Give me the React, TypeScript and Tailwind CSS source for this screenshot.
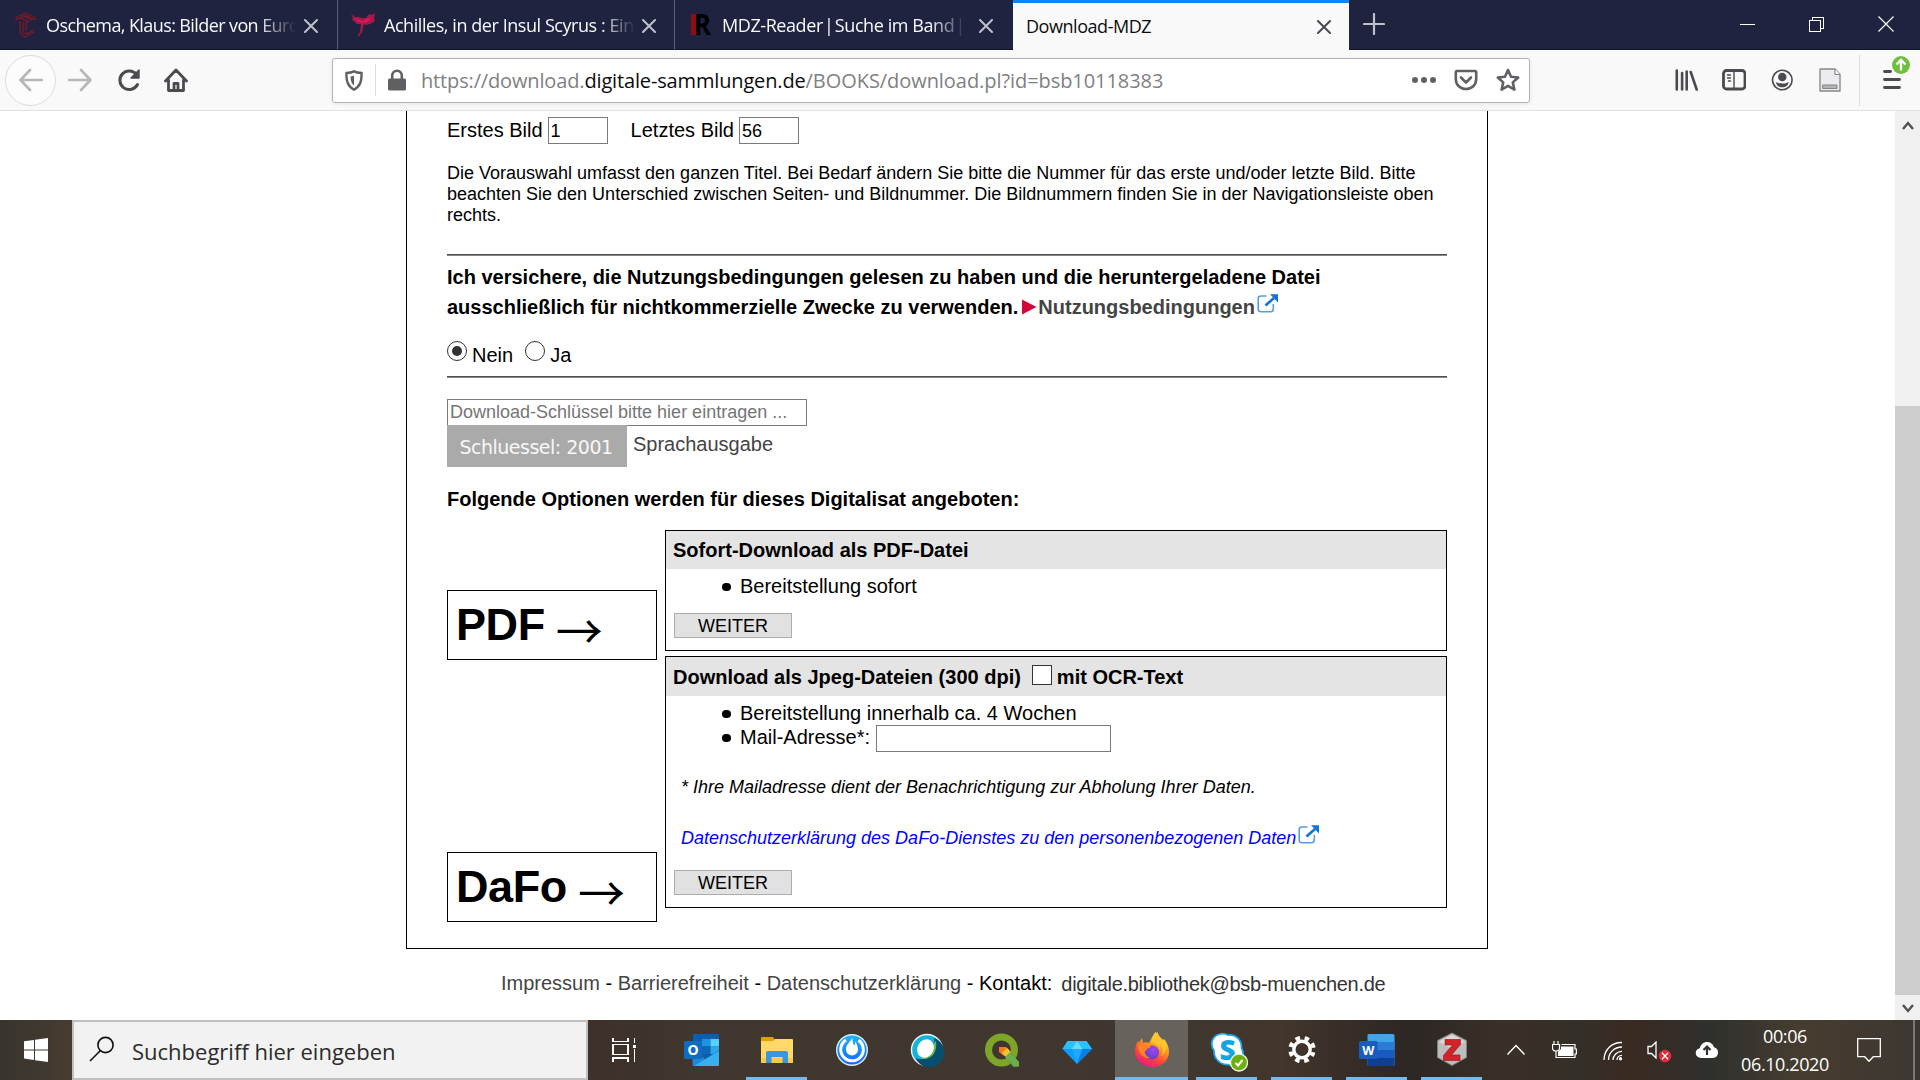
import React from "react";

type Kids = { children?: React.ReactNode };

const ui = "font-['Open_Sans',sans-serif]";

/* ---------- browser chrome ---------- */

function Cross({ className }: { className: string }) {
  return (
    <svg viewBox="0 0 14 14" className={`h-3.5 w-3.5 shrink-0 ${className}`}>
      <path d="M1 1l12 12M13 1L1 13" stroke="currentColor" strokeWidth="2" strokeLinecap="round" />
    </svg>
  );
}

function Tab({ icon, children, className, textClass }: Kids & { icon: React.ReactNode; className: string; textClass: string }) {
  return (
    <div className={`flex h-[50px] items-center overflow-hidden pt-px ${className}`}>
      {icon}
      <div
        className={`shrink-0 overflow-hidden whitespace-nowrap text-[18px] leading-6 text-[#f9f9fa] ${textClass}`}
      >
        {children}
      </div>
      <Cross className="mt-px text-[#bfc0ca]" />
    </div>
  );
}

function FavC() {
  return (
    <svg viewBox="0 0 22 26" className="mr-[9px] h-[26px] w-[22px] shrink-0" fill="none" stroke="#7d1a26" strokeWidth="1.300">
      <path d="M1 5.500L10.500 1 20 5.500M1 8l9.500-4.500L20 8M4.500 5.500l10 4.500M8 3.500l9 4.500M5 9v12l5 4 9-5M8 9.500v10.500l3 2 8-4M11 9.500v9M14 9.500L11 11M1 5.500V8M20 5.500V8" />
    </svg>
  );
}

function FavEagle() {
  return (
    <svg viewBox="0 0 24 26" className="mr-[9px] h-[26px] w-6 shrink-0">
      <path
        d="M0 2l4 3 4 0 3 1 4 0 3-4 2 1 4-2-1 5 1 3-3 2-2 1-4 1-2-1-1 4-1 4-2 3-2 2 0-2 2-3 1-8-4 0-3-3-2-1 1-2z"
        fill="#a8174a"
      />
      <path d="M3 5l5 3 4 1 5-3 3 1-4 3-6 1-4-2z" fill="#d9185a" />
    </svg>
  );
}

function FavR() {
  return (
    <svg viewBox="0 0 20 24" className="mr-[11px] h-6 w-5 shrink-0">
      <rect x="0" y="1" width="5" height="21" fill="#8c0d12" />
      <text x="3" y="22" fontFamily="Open Sans" fontWeight="700" fontSize="28" fill="#000" textLength="17" lengthAdjust="spacingAndGlyphs">
        R
      </text>
    </svg>
  );
}

function TabStrip() {
  return (
    <div className={`flex h-[50px] bg-[#202340] ${ui}`}>
      <Tab
        icon={<FavC />}
        className="w-[338px] border-r border-b border-r-[#5d5f75] border-b-[#14162e] pl-[15px]"
        textClass="mr-[8px] w-[250px] tracking-[-0.6px] [mask-image:linear-gradient(to_left,transparent,black_38px)]"
      >
        Oschema, Klaus: Bilder von Europa
      </Tab>
      <Tab
        icon={<FavEagle />}
        className="w-[337px] border-r border-b border-r-[#5d5f75] border-b-[#14162e] pl-[13px]"
        textClass="mr-[7px] w-[251px] tracking-[-0.44px] [mask-image:linear-gradient(to_left,transparent,black_34px)]"
      >
        Achilles, in der Insul Scyrus : Ein
      </Tab>
      <Tab
        icon={<FavR />}
        className="w-[338px] border-b border-b-[#14162e] pl-[16px]"
        textClass="mr-[7px] w-[250px] tracking-[-0.42px] [mask-image:linear-gradient(to_left,transparent_6px,black_42px)]"
      >
        MDZ-Reader <span className="-mx-[3px]">|</span> Suche im Band <span className="-mx-[3px]">|</span> A
      </Tab>
      <div className="flex w-[336px] items-center justify-between border-t-[3px] border-[#0a84ff] bg-[#f9f9fa] pr-[18px] pb-[2px] pl-[13px] text-[18px] leading-6 tracking-[-0.45px] text-[#0c0c0d]">
        Download-MDZ
        <Cross className="mt-[2px] text-[#4a4a4f]" />
      </div>
      <div className="flex flex-1 items-center justify-between border-b border-[#14162e] pr-[26px] pb-px pl-[14px]">
        <svg viewBox="0 0 22 22" className="h-[22px] w-[22px]">
          <path d="M11 1v20M1 11h20" stroke="#bfc0ca" strokeWidth="2.200" strokeLinecap="round" />
        </svg>
        <div className="flex items-center gap-[54px] text-white">
          <svg viewBox="0 0 15 15" className="h-[15px] w-[15px]" shapeRendering="crispEdges">
            <path d="M0 7.500h15" stroke="currentColor" />
          </svg>
          <svg viewBox="0 0 15 15" className="h-[15px] w-[15px]" fill="none" stroke="currentColor" shapeRendering="crispEdges">
            <path d="M.5 3.500h11v11h-11zM3.500 3.500v-3h11v11h-3" />
          </svg>
          <svg viewBox="0 0 16 16" className="h-4 w-4" stroke="currentColor" strokeWidth="1.200">
            <path d="M.5.500l15 15M15.500.500l-15 15" />
          </svg>
        </div>
      </div>
    </div>
  );
}

function NavIcon({ children, className = "text-[#4a4a4f]" }: Kids & { className?: string }) {
  return (
    <svg viewBox="0 0 24 24" className={`h-6 w-6 shrink-0 ${className}`} fill="none" stroke="currentColor" strokeWidth="2.600" strokeLinecap="round" strokeLinejoin="round">
      {children}
    </svg>
  );
}

function Toolbar() {
  return (
    <div className={`flex h-[61px] items-center border-b border-[#e1e1e2] bg-[#f9f9fa] ${ui}`}>
      <div className="ml-[5px] flex h-[51px] w-[51px] items-center justify-center rounded-full border border-[#dcdcdd] bg-[#fcfcfc]">
        <NavIcon className="text-[#b7b7ba]">
          <path d="M23 12H2M11 2L1.500 12l9.500 10" />
        </NavIcon>
      </div>
      <div className="ml-[12px] flex gap-6">
        <NavIcon className="text-[#b7b7ba]">
          <path d="M1 12h21M13 2l9.500 10L13 22" />
        </NavIcon>
        <NavIcon>
          <path d="M21.500 16.500A9.300 9.300 0 1 1 20.500 6.500" strokeWidth="3" />
          <path d="M23 2v8h-8z" fill="currentColor" strokeWidth="1.400" />
        </NavIcon>
        <NavIcon>
          <path d="M1.500 13L12 2l10.500 11M4.500 12v10.500h15V12M10 22v-6.500h4V22" strokeWidth="2.800" />
        </NavIcon>
      </div>
      <div className="ml-[144px] flex h-[45px] w-[1198px] items-center rounded-[3px] border border-[#b4b4b6] bg-white text-[20px] leading-[26px] text-[#808083] shadow-[0_1px_4px_rgba(0,0,0,0.08)]">
        <svg viewBox="0 0 18 21" className="ml-3 h-[21px] w-[18px] shrink-0" fill="none" stroke="#606064" strokeWidth="2.400" strokeLinejoin="round">
          <path d="M9 1.300c2.500 1.200 5 1.500 7.600 1.700 0 8-1 13-7.600 16.700C2.400 16 1.400 11 1.400 3 4 2.800 6.500 2.500 9 1.300z" />
          <path d="M9 5.500c-1.300.6-2.200.8-3.500 1 .2 4.300.8 7 3.500 9z" fill="#606064" stroke="none" />
        </svg>
        <div className="ml-3 h-8 w-px bg-[#dededf]" />
        <svg viewBox="0 0 18 22" className="ml-3 h-[22px] w-[18px] shrink-0">
          <path d="M4.200 11V6.500a4.800 4.800 0 0 1 9.600 0V11" fill="none" stroke="#606064" strokeWidth="2.600" />
          <rect x="0" y="9.500" width="18" height="12" rx="1.500" fill="#606064" />
        </svg>
        <div className="ml-[15px] flex-1 whitespace-nowrap pt-px tracking-[-0.06px]">
          <span className="tracking-[-0.15px]">https://download.</span>
          <span className="tracking-[-0.15px] text-[#0c0c0d]">digitale-sammlungen.de</span>/BOOKS/download.pl?id=bsb10118383
        </div>
        <svg viewBox="0 0 24 6" className="h-1.5 w-6" fill="#606064">
          <circle cx="3" cy="3" r="3" />
          <circle cx="12" cy="3" r="3" />
          <circle cx="21" cy="3" r="3" />
        </svg>
        <NavIcon className="ml-[18px] text-[#606064]">
          <path d="M3 3h18c.8 0 1.200.5 1.200 1.200V11c0 6-4.500 10-10.200 10S1.800 17 1.800 11V4.200C1.800 3.500 2.200 3 3 3zM7 9.500l5 5 5-5" strokeWidth="2.600" />
        </NavIcon>
        <NavIcon className="mr-[9px] ml-[18px] text-[#606064]">
          <path d="M12 2l3 6.700 7.200.8-5.400 4.900 1.600 7.200L12 17.900l-6.400 3.700 1.600-7.200L1.800 9.500 9 8.700z" strokeWidth="2.600" />
        </NavIcon>
      </div>
      <div className="ml-[144px] flex items-center gap-6">
        <NavIcon>
          <path d="M2.800 2.500v19M8.100 5v16.500M12.700 3.500v18M16.700 4l6 17.500" strokeWidth="2.600" />
        </NavIcon>
        <NavIcon>
          <rect x="1.500" y="2.500" width="21.500" height="18.500" rx="3" strokeWidth="2.800" />
          <path d="M12 3v18M5.500 7h3M5.500 10h3M6.500 13h2" strokeWidth="1.400" />
        </NavIcon>
        <NavIcon>
          <circle cx="12.300" cy="12" r="9.800" strokeWidth="1.600" />
          <ellipse cx="12.300" cy="9" rx="4.200" ry="4.300" fill="currentColor" stroke="none" />
          <path d="M5.800 14.200c2 .3 2.500 1.300 6.500 1.300s4.500-1 6.500-1.300C17.800 18 15.300 19.300 12.300 19.300S6.800 18 5.800 14.200z" fill="currentColor" stroke="none" />
        </NavIcon>
        <NavIcon className="text-[#86868a]">
          <path d="M2 1h15l5 5.500V23H2z" fill="#ececee" strokeWidth="1.300" />
          <path d="M17 1v5.500h5" fill="#fff" strokeWidth="1.200" />
          <rect x="5" y="17" width="14" height="3.500" fill="#b3b3b6" strokeWidth="1" />
        </NavIcon>
      </div>
      <div className="ml-[17px] h-[51px] w-px bg-[#dededf]" />
      <svg viewBox="0 0 30 36" className="-mt-[14px] ml-[22px] h-9 w-[30px]">
        <path d="M2.500 16.500h6M2.500 24.500h15M2.500 32.500h15" stroke="#4a4a4f" strokeWidth="2.800" strokeLinecap="round" />
        <circle cx="19" cy="10" r="9" fill="#70bf3f" />
        <path d="M19 15.500V5.500M14.500 9.500L19 5l4.500 4.500" fill="none" stroke="#fff" strokeWidth="2.300" />
      </svg>
    </div>
  );
}

/* ---------- page ---------- */

function ExternalIcon({ className }: { className: string }) {
  return (
    <svg viewBox="0 0 21 19" className={`inline-block h-[19px] w-[21px] ${className}`} fill="none">
      <path d="M9.500 2H4Q1.200 2 1.200 4.500v10.500Q1.200 17.700 4 17.700h9.500q2.800 0 2.800-2.700v-5" stroke="#5a9de0" strokeWidth="1.600" />
      <path d="M8.500 11.500L17 4" stroke="#1273d1" strokeWidth="2.600" />
      <path d="M13 .3h8V8.500z" fill="#1273d1" />
    </svg>
  );
}

function Field({ children, className }: Kids & { className: string }) {
  return <div className={`flex h-[27px] items-center border border-[#7a7a7a] bg-white px-[2px] text-[18px] leading-5 ${className}`}>{children}</div>;
}

function Rule({ className }: { className: string }) {
  return <div className={`h-[2px] border-t border-b border-t-[#4f4f4f] border-b-[#858585] ${className}`} />;
}

function Weiter({ className }: { className: string }) {
  return (
    <div className={`ml-2 flex h-[25px] w-[118px] items-center justify-center border border-[#adadad] bg-[#e1e1e1] text-[18px] leading-5 ${className}`}>
      WEITER
    </div>
  );
}

function Bullet({ children }: Kids) {
  return (
    <li className="flex h-6 items-start whitespace-nowrap">
      <span className="mt-[9px] mr-[9px] h-2 w-[9px] rounded-full bg-black" />
      {children}
    </li>
  );
}

function BigLabel({ children, className }: Kids & { className: string }) {
  return (
    <div className={`flex h-[70px] items-center border border-black pl-2 text-[45px] leading-[50px] font-bold tracking-[-0.4px] ${className}`}>
      {children}
      <span className="ml-[11px] inline-block translate-y-[4px] font-['Noto_Sans_CJK_JP',sans-serif] text-[47px] font-normal">→</span>
    </div>
  );
}

function Page() {
  return (
    <div className="flex h-[909px] bg-white font-['Liberation_Sans',Arial,sans-serif] text-[20px] leading-5 text-black">
      <div className="min-w-0 flex-1 pl-[406px]">
        <div className="w-[1082px] border-x border-b border-black px-10 pt-[6px] pb-[26px]">
          <div className="flex h-[27px] items-center whitespace-nowrap">
            <span className="mb-[2px]">Erstes Bild</span>
            <Field className="ml-[5px] w-[60px]">1</Field>
            <span className="mb-[2px] ml-[23px]">Letztes Bild</span>
            <Field className="ml-[5px] w-[60px]">56</Field>
          </div>
          <p className="mt-[19px] text-[18px] leading-[21px]">
            Die Vorauswahl umfasst den ganzen Titel. Bei Bedarf ändern Sie bitte die Nummer für das erste und/oder letzte Bild. Bitte
            <br />
            beachten Sie den Unterschied zwischen Seiten- und Bildnummer. Die Bildnummern finden Sie in der Navigationsleiste oben
            <br />
            rechts.
          </p>
          <Rule className="mt-[28px]" />
          <p className="mt-[6px] h-[60px] leading-[30px] font-bold whitespace-nowrap">
            Ich versichere, die Nutzungsbedingungen gelesen zu haben und die heruntergeladene Datei
            <br />
            ausschließlich für nichtkommerzielle Zwecke zu verwenden.
            <svg viewBox="0 0 15 16" className="mr-px ml-[4px] inline-block h-4 w-[15px] align-[-1px]">
              <path d="M0 .5L14.500 8 0 15.500z" fill="#d3053b" />
            </svg>
            <span className="text-[#444]">Nutzungsbedingungen</span>
            <ExternalIcon className="ml-[2px] align-[1px]" />
          </p>
          <div className="mt-[19px] flex h-5 items-start">
            <span className="flex h-5 w-5 items-center justify-center rounded-full border border-[#333]">
              <span className="h-2.5 w-2.5 rounded-full bg-[#333]" />
            </span>
            <span className="mt-1 ml-[5px]">Nein</span>
            <span className="ml-[12px] h-5 w-5 rounded-full border border-[#333]" />
            <span className="mt-1 ml-[5px]">Ja</span>
          </div>
          <Rule className="mt-[15px]" />
          <Field className="mt-[21px] w-[360px] pb-[2px] text-[#757575]">Download-Schlüssel bitte hier eintragen ...</Field>
          <div className="-mt-px flex h-[42px]">
            <div className="flex w-[180px] items-center justify-center bg-[#aaa] pt-px pr-[2px] font-['DejaVu_Sans',sans-serif] text-[19px] tracking-[-0.5px] whitespace-nowrap text-[#f7f7f7]">
              Schluessel: 2001
            </div>
            <span className="mt-[9px] ml-[6px] text-[#444]">Sprachausgabe</span>
          </div>
          <p className="mt-[22px] font-bold">Folgende Optionen werden für dieses Digitalisat angeboten:</p>
          <div className="mt-[21px] flex gap-2">
            <div className="w-[210px] pt-[60px]">
              <BigLabel className="">PDF</BigLabel>
              <BigLabel className="mt-[192px]">DaFo</BigLabel>
            </div>
            <div className="flex-1">
              <section className="h-[121px] border border-black">
                <h2 className="flex h-[38px] items-center bg-[#e4e4e4] pl-[7px] font-bold">Sofort-Download als PDF-Datei</h2>
                <ul className="mt-[5px] pl-[56px] leading-6">
                  <Bullet>Bereitstellung sofort</Bullet>
                </ul>
                <Weiter className="mt-[15px]" />
              </section>
              <section className="mt-[5px] h-[252px] border border-black">
                <h2 className="flex h-[39px] items-center bg-[#e4e4e4] pl-[7px] font-bold">
                  Download als Jpeg-Dateien (300 dpi)
                  <span className="mr-[5px] mb-[3px] ml-[11px] h-5 w-5 border border-[#333] bg-white" />
                  mit OCR-Text
                </h2>
                <ul className="mt-[5px] pl-[56px] leading-6">
                  <Bullet>Bereitstellung innerhalb ca. 4 Wochen</Bullet>
                  <Bullet>
                    Mail-Adresse*:
                    <Field className="ml-[6px] w-[235px]" />
                  </Bullet>
                </ul>
                <p className="mt-[28px] pl-[15px] text-[18px] leading-[21px] italic">* Ihre Mailadresse dient der Benachrichtigung zur Abholung Ihrer Daten.</p>
                <p className="mt-[30px] flex h-[21px] pl-[15px] text-[18px] leading-[21px] text-[#0000ff] italic">
                  Datenschutzerklärung des DaFo-Dienstes zu den personenbezogenen Daten
                  <ExternalIcon className="-mt-[3px] ml-[2px]" />
                </p>
                <Weiter className="mt-[21px]" />
              </section>
            </div>
          </div>
        </div>
        <footer className="mt-6 flex pl-[95px] whitespace-pre text-[#444]">
          Impressum<span className="text-black"> - </span>Barrierefreiheit<span className="text-black"> - </span>Datenschutzerklärung
          <span className="text-black"> - Kontakt:</span>
          <span className="ml-[9px] pt-px tracking-[-0.28px] text-[#333]">digitale.bibliothek@bsb-muenchen.de</span>
        </footer>
      </div>
      <div className="flex w-[25px] flex-col items-center bg-[#f0f0f0]">
        <svg viewBox="0 0 12 9" className="mt-[10px] h-[9px] w-3 shrink-0">
          <path d="M1 8l5-6 5 6" fill="none" stroke="#505050" strokeWidth="2.400" />
        </svg>
        <div className="mt-[276px] h-[589px] w-full bg-[#cdcdcd]" />
        <svg viewBox="0 0 12 9" className="mt-[9px] h-[9px] w-3 shrink-0">
          <path d="M1 1l5 6 5-6" fill="none" stroke="#505050" strokeWidth="2.400" />
        </svg>
      </div>
    </div>
  );
}

/* ---------- taskbar ---------- */

function App36({ children }: Kids) {
  return (
    <svg viewBox="0 0 36 36" className="h-9 w-9">
      {children}
    </svg>
  );
}

function Slot({ children, running, active }: Kids & { running?: boolean; active?: boolean }) {
  return (
    <div className="flex h-full w-[75px] justify-center">
      <div className={`flex h-full flex-col items-center pt-3 ${active ? "w-[73px] bg-[#68625d]" : "w-[61px]"}`}>
        {children}
        {(running || active) && <div className="mt-auto h-[3px] w-full bg-[#76b9ed]" />}
      </div>
    </div>
  );
}

function Outlook() {
  return (
    <App36>
      <rect x="9" y="2" width="26" height="24" rx="1.500" fill="#0a5fb4" />
      <rect x="18" y="7" width="8.500" height="7.500" fill="#1e94de" />
      <rect x="26.500" y="7" width="8.500" height="7.500" fill="#52d4fb" />
      <rect x="18" y="14.500" width="8.500" height="7.500" fill="#0f66b9" />
      <rect x="26.500" y="14.500" width="8.500" height="7.500" fill="#2aa6ea" />
      <path d="M8.500 19l13 8 13.500-9v14.500q0 1.500-1.500 1.500H10q-1.500 0-1.500-1.500z" fill="#1c8ad8" />
      <path d="M10 34l25-15v13.500q0 1.500-1.500 1.500z" fill="#38b0ee" />
      <rect x="0" y="9" width="18" height="18" rx="1.500" fill="#0f6cbf" />
      <text x="9" y="23" textAnchor="middle" fontFamily="Open Sans" fontWeight="700" fontSize="14" fill="#fff">O</text>
    </App36>
  );
}

function Explorer() {
  return (
    <App36>
      <path d="M2 6q0-1 1-1h11l2 3v4H2z" fill="#e0a000" />
      <path d="M2 9h12l2-2h17q1 0 1 1v22q0 1-1 1H3q-1 0-1-1z" fill="#ffd868" />
      <path d="M2 26h32v4q0 1-1 1H3q-1 0-1-1z" fill="#f7c94d" />
      <path d="M7 31V21q0-2 2-2h18q2 0 2 2v10h-5.500v-6h-11v6z" fill="#3a96dd" />
    </App36>
  );
}

function Mattermost() {
  return (
    <App36>
      <defs>
        <linearGradient id="mm" x1="0" y1="0" x2="0" y2="1">
          <stop offset="0" stopColor="#23b4f7" />
          <stop offset="1" stopColor="#0a68ff" />
        </linearGradient>
      </defs>
      <circle cx="18" cy="18" r="15.300" fill="url(#mm)" stroke="#dfe9f2" strokeWidth="1.400" />
      <path d="M12 8A11.300 11.300 0 1 0 24.500 8.300" fill="none" stroke="#fff" strokeWidth="3" />
      <path d="M18.500 6c-2.500 3.500-6.500 7-6.500 11.500a6 6 0 0 0 12 0c0-3-1.500-5-2.200-8-.8 1-1 3-1.300 4.500C19 12 18.500 9 18.500 6z" fill="#fff" />
    </App36>
  );
}

function Webex() {
  return (
    <App36>
      <circle cx="18" cy="18" r="15.500" fill="#14b4d8" stroke="#eef4f5" strokeWidth="1.400" />
      <path d="M25 6a15 15 0 1 1-18.500 20c7 3 14 0 16.500-5 2.500-5 3-10 2-15z" fill="#074f6c" />
      <path d="M27 9c1.500 10-3 18-13 18-4-1 2-4 5-8z" fill="#64bd4d" />
      <ellipse cx="16.500" cy="16.500" rx="8" ry="9.500" transform="rotate(30 16.500 16.500)" fill="#fff" />
    </App36>
  );
}

function Qgis() {
  return (
    <App36>
      <circle cx="17.500" cy="18" r="13" fill="none" stroke="#7ea428" strokeWidth="7" />
      <path d="M18 20l6-3 11 13v5h-6z" fill="#55933a" />
      <path d="M15 15h7l3 3-5 6-5-4z" fill="#ef7b22" />
      <path d="M18 21l5-5 4 4-5 5z" fill="#f8c42d" />
      <path d="M21 25l5-5 9 10v4h-5z" fill="#6cad4c" />
    </App36>
  );
}

function Gem() {
  return (
    <App36>
      <path d="M8.500 9h19l5.500 8-15 15L3.500 17z" fill="#0a9dfb" />
      <path d="M8.500 9h19l5.500 8H3.500z" fill="#2ec0fc" />
      <path d="M13 17l5-8 5.500 8z" fill="#6ed8ff" />
      <path d="M13 17h10.500L18 32z" fill="#1ca9ff" />
      <path d="M23.500 17H33L18 32z" fill="#0a7de8" />
    </App36>
  );
}

function Firefox() {
  return (
    <App36>
      <defs>
        <linearGradient id="fx" x1="0.800" y1="0" x2="0.300" y2="1">
          <stop offset="0" stopColor="#fff04a" />
          <stop offset="0.400" stopColor="#ff9a1f" />
          <stop offset="0.700" stopColor="#ff4538" />
          <stop offset="1" stopColor="#e5178a" />
        </linearGradient>
        <radialGradient id="fxc" cx="0.600" cy="0.300" r="0.800">
          <stop offset="0" stopColor="#a244f0" />
          <stop offset="1" stopColor="#5a3fc0" />
        </radialGradient>
      </defs>
      <path
        d="M21.500 0c4 3 4.500 6 6.500 9l2-2c3 3.500 5 8 5 13 0 8-7 15-16.500 15S1 28.500 1 20c0-5 1.500-8 3-11l1 2 3-5 1 5c2-1 4-1 6 0 2-4 4-8 6.500-11z"
        fill="url(#fx)"
      />
      <circle cx="18" cy="20.500" r="7" fill="url(#fxc)" />
      <path d="M4 14c5-3 8-2 13 0-1 2-3 2-4 3 0 1-1.500 2-2.500 2.500 1 4 3 6 7 6-6 2-13-2-13.500-11.500z" fill="#ff8224" />
      <path d="M17 11c5 0 8 3 9 7 .5-3 0-6-1-8 4 4 5 10 2 15 6-6 7-13 1-18-2-2-4-4-4.500-7-3 3-5 6-6.500 11z" fill="#ffc52e" />
    </App36>
  );
}

function Skype() {
  return (
    <svg viewBox="0 0 38 40" className="ml-1 h-10 w-[38px] shrink-0">
      <path d="M10 2c3-1 6 0 8 1 8-1 14 5 13.500 13 3 5 2 13-3 16-4 2-8 1.500-11 .5C10 33 3.500 26 4 18.500-.5 12 2 4 10 2z" fill="#fff" stroke="#1ba3e4" strokeWidth="1.800" />
      <text x="17.500" y="27.500" textAnchor="middle" fontFamily="Open Sans" fontWeight="800" fontSize="28" fill="#12a5e6">S</text>
      <circle cx="29" cy="30.500" r="8.500" fill="#6bb00c" stroke="#f2f4ee" strokeWidth="1.300" />
      <path d="M25.500 31l2.500 2.500 4.500-5.500" fill="none" stroke="#fff" strokeWidth="2" />
    </svg>
  );
}

function Gear() {
  return (
    <App36>
      <circle cx="18" cy="17.500" r="8.200" fill="none" stroke="#fff" strokeWidth="3.400" />
      <circle cx="18" cy="17.500" r="11.600" fill="none" stroke="#fff" strokeWidth="4.200" strokeDasharray="4.600 4.510" strokeDashoffset="2.300" transform="rotate(22.500 18 17.500)" />
    </App36>
  );
}

function Word() {
  return (
    <App36>
      <rect x="8.500" y="2" width="27" height="32" rx="1.500" fill="#41a5ee" />
      <path d="M8.500 10h27v8h-27z" fill="#2b7cd3" />
      <path d="M8.500 18h27v8h-27z" fill="#185abd" />
      <path d="M8.500 26h27v6.500q0 1.500-1.500 1.500h-24q-1.500 0-1.500-1.500z" fill="#103f91" />
      <rect x="0" y="9" width="18.500" height="18" rx="1.500" fill="#1a5cbe" />
      <text x="9.300" y="22.500" textAnchor="middle" fontFamily="Open Sans" fontWeight="700" fontSize="12.500" fill="#fff">W</text>
    </App36>
  );
}

function Zotero() {
  return (
    <App36>
      <path d="M18 1l14.500 7.500v17L18 33.500 3.500 25.500v-17z" fill="#bdbdbd" stroke="#7e7e7e" />
      <path d="M18 2.500l13 7L18 17 5 9.500z" fill="#d9d9d9" />
      <path d="M11 7.500h15.500v5L17.500 23h8.500v5.500H9.500V23.500L18.500 13H11z" fill="#d2232a" stroke="#8d1216" strokeWidth="0.600" />
    </App36>
  );
}

function Taskbar() {
  return (
    <div className={`flex h-[60px] bg-[linear-gradient(to_right,#38342d_0px,#463c31_72px,#3d3129_600px,#40372f_700px,#3f372f_1180px,#43362c_1280px,#2c2624_1410px,#3a3027_1500px,#342f28_1580px,#3a2a22_1630px,#2f302d_1710px,#463d30_1800px,#3f3831_1900px,#3a3733_1920px)] ${ui}`}>
      <div className="flex w-[72px] items-center justify-center">
        <svg viewBox="0 0 24 24" className="h-6 w-6 fill-white">
          <path d="M0 3.300l10-1.300v9.400H0zM11 1.800L24 0v11.400H11zM0 12.500h10V22L0 20.600zM11 12.500h13V24l-13-1.800z" />
        </svg>
      </div>
      <div className="flex w-[516px] items-center border-2 border-[#c0c0c0] bg-[#f2f2f2] text-[22px] leading-7 text-[#2b2b2b]">
        <svg viewBox="0 0 26 26" className="mb-[2px] ml-[15px] h-[26px] w-[26px]" fill="none" stroke="#111" strokeWidth="1.600">
          <circle cx="16.500" cy="9" r="7.600" />
          <path d="M11.500 14.500L1 25" />
        </svg>
        <span className="mt-[2px] ml-[17px]">Suchbegriff hier eingeben</span>
      </div>
      <div className="flex w-[75px] items-center justify-center pr-[2px]">
        <svg viewBox="0 0 25 24" className="h-6 w-[25px]" fill="none" stroke="#fff" strokeWidth="1.200" shapeRendering="crispEdges">
          <path d="M1 0v3.500h15V0M1 6.500h15v10H1zM1 23.500v-3.500h15v3.500M22.500 0v5M22.500 10.500v13" />
          <path d="M21 7h3v3h-3z" fill="#fff" stroke="none" />
        </svg>
      </div>
      <div className="ml-px flex h-full">
        <Slot><Outlook /></Slot>
        <Slot running><Explorer /></Slot>
        <Slot><Mattermost /></Slot>
        <Slot><Webex /></Slot>
        <Slot><Qgis /></Slot>
        <Slot><Gem /></Slot>
        <Slot active><Firefox /></Slot>
        <Slot running><Skype /></Slot>
        <Slot running><Gear /></Slot>
        <Slot running><Word /></Slot>
        <Slot running><Zotero /></Slot>
      </div>
      <div className="flex flex-1 items-center pl-[18px] text-white">
        <svg viewBox="0 0 18 12" className="h-3 w-[18px]" fill="none" stroke="currentColor" strokeWidth="1.400">
          <path d="M.5 10.500L9 1.500l8.500 9" />
        </svg>
        <svg viewBox="0 0 25 18" className="mb-px ml-[27px] h-[18px] w-[25px]" fill="none" stroke="currentColor" strokeWidth="1.200">
          <path d="M2 0v3.500M6 0v3.500M.5 3.500h7V7q0 3-3.500 3T.5 7zM4 10v6.500h19V13h1.400V8H23V3.500H9.500" />
          <path d="M9 5.500h12.500V15H6V10.500L9 8z" fill="currentColor" stroke="none" />
        </svg>
        <svg viewBox="0 0 20 20" className="mt-[2px] ml-[26px] h-5 w-5" fill="none" stroke="currentColor" strokeWidth="1.300">
          <path d="M1 19C1 9 9 1 19 1.500M5.500 19C5.500 12 11 6 19 6M10 19c0-4.500 4-8.700 9-8.700M14 19c0-2.500 2-4.700 5-4.700" />
          <circle cx="17.500" cy="17.700" r="1.700" fill="currentColor" stroke="none" />
        </svg>
        <svg viewBox="0 0 25 22" className="mt-[3px] ml-[24px] h-[22px] w-[25px]" fill="none" stroke="currentColor" strokeWidth="1.300">
          <path d="M9 1v16l-4.500-4.500H1v-7h3.500z" />
          <circle cx="18" cy="15" r="6.300" fill="#dd2c34" stroke="none" />
          <path d="M15 11.800l6 6.400M21 11.800l-6 6.400" stroke="#fff" />
        </svg>
        <svg viewBox="0 0 24 16" className="ml-[23px] h-4 w-6">
          <path d="M6 16a6 5 0 0 1-1.200-9.700C5.500 2.500 8.500 0 12 0s6 2 7 5.300A5.500 5.500 0 0 1 18.500 16z" fill="currentColor" />
          <path d="M12 13V5M8.500 8L12 4.500 15.500 8" fill="none" stroke="#333" strokeWidth="2.200" />
        </svg>
        <div className="ml-[22px] w-[88px] text-center text-[18px] leading-[28px] tracking-[-0.4px]">
          00:06
          <br />
          06.10.2020
        </div>
        <svg viewBox="0 0 24 24" className="ml-[28px] h-6 w-6" fill="none" stroke="currentColor" strokeWidth="1.300">
          <path d="M.7.700h22.600v18h-7L12 23.300l-4.300-4.600h-7z" />
        </svg>
        <div className="mr-[5px] ml-auto h-full w-[2px] bg-[#7c7772]" />
      </div>
    </div>
  );
}

export default function App() {
  return (
    <div className="h-[1080px] w-[1920px] overflow-hidden">
      <TabStrip />
      <Toolbar />
      <Page />
      <Taskbar />
    </div>
  );
}
